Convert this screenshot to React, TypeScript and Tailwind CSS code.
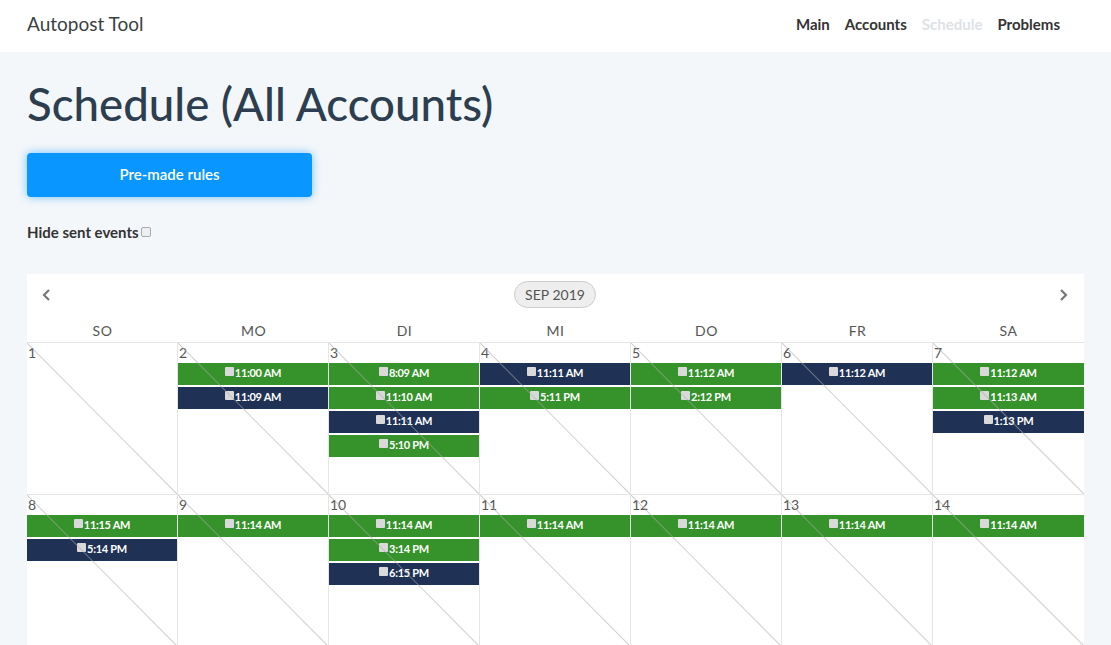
import React from "react";

type Ev = { t: string; c: "g" | "n" };

const weeks: { d: number; ev: Ev[] }[][] = [
  [
    { d: 1, ev: [] },
    { d: 2, ev: [{ t: "11:00 AM", c: "g" }, { t: "11:09 AM", c: "n" }] },
    {
      d: 3,
      ev: [
        { t: "8:09 AM", c: "g" },
        { t: "11:10 AM", c: "g" },
        { t: "11:11 AM", c: "n" },
        { t: "5:10 PM", c: "g" },
      ],
    },
    { d: 4, ev: [{ t: "11:11 AM", c: "n" }, { t: "5:11 PM", c: "g" }] },
    { d: 5, ev: [{ t: "11:12 AM", c: "g" }, { t: "2:12 PM", c: "g" }] },
    { d: 6, ev: [{ t: "11:12 AM", c: "n" }] },
    {
      d: 7,
      ev: [
        { t: "11:12 AM", c: "g" },
        { t: "11:13 AM", c: "g" },
        { t: "1:13 PM", c: "n" },
      ],
    },
  ],
  [
    { d: 8, ev: [{ t: "11:15 AM", c: "g" }, { t: "5:14 PM", c: "n" }] },
    { d: 9, ev: [{ t: "11:14 AM", c: "g" }] },
    {
      d: 10,
      ev: [
        { t: "11:14 AM", c: "g" },
        { t: "3:14 PM", c: "g" },
        { t: "6:15 PM", c: "n" },
      ],
    },
    { d: 11, ev: [{ t: "11:14 AM", c: "g" }] },
    { d: 12, ev: [{ t: "11:14 AM", c: "g" }] },
    { d: 13, ev: [{ t: "11:14 AM", c: "g" }] },
    { d: 14, ev: [{ t: "11:14 AM", c: "g" }] },
  ],
];

const days = ["SO", "MO", "DI", "MI", "DO", "FR", "SA"];

function Event({ ev }: { ev: Ev }) {
  return (
    <div
      className={
        "flex h-[22px] items-center justify-center text-[11px] font-bold tracking-[-0.3px] text-white " +
        (ev.c === "g" ? "bg-[#36922a]" : "bg-[#1f3256]")
      }
    >
      <span className="mr-px mb-[5px] inline-block h-[9px] w-[9px] rounded-[1px] bg-[#d9d9d9]" />
      {ev.t}
    </div>
  );
}

export default function App() {
  return (
    <div className="min-h-screen bg-[#f4f7fa] font-['Lato',sans-serif] text-[#333]">
      <nav className="flex h-[52px] items-center justify-between bg-white pb-[4px] pl-[27px] pr-[51px]">
        <span className="text-[19px] text-[#3a3f44]">Autopost Tool</span>
        <div className="flex gap-[15px] text-[15px] font-bold text-[#333]">
          <a>Main</a>
          <a>Accounts</a>
          <a className="text-[#dde2e6]">Schedule</a>
          <a>Problems</a>
        </div>
      </nav>

      <main className="px-[27px]">
        <h1 className="mt-[24px] text-[45.6px] font-medium leading-[56px] text-[#2c3e50]">
          Schedule (All Accounts)
        </h1>
        <button className="mt-[21px] h-[44px] w-[285px] rounded-[4px] bg-[#0a96ff] pb-[2px] text-[15px] font-semibold text-white shadow-[0_0_10px_rgba(10,150,255,0.55)]">
          Pre-made rules
        </button>
        <label className="mt-[24px] flex items-center text-[15px] font-bold text-[#333]">
          Hide sent events
          <span className="ml-[2px] inline-block h-[10px] w-[10px] rounded-[2px] border border-[#aaa] bg-[#eee]" />
        </label>

        <section className="mt-[30px] w-[1057px] bg-white">
          <div className="flex h-[44px] items-center justify-between px-[13px] pb-[2px]">
            <svg width="12" height="14" viewBox="0 0 12 14" className="ml-[1px]">
              <path d="M8 2 L3 7 L8 12" fill="none" stroke="#777" strokeWidth="2.2" />
            </svg>
            <span className="rounded-full border border-[#ccc] bg-[#eeeeee] px-[10px] py-[2px] text-[14px] text-[#555]">
              SEP 2019
            </span>
            <svg width="12" height="14" viewBox="0 0 12 14" className="mr-[2px]">
              <path d="M4 2 L9 7 L4 12" fill="none" stroke="#777" strokeWidth="2.2" />
            </svg>
          </div>
          <div className="grid grid-cols-7 border-b border-[#e6e6e6]">
            {days.map((d) => (
              <div key={d} className="h-[24px] text-center text-[14px] leading-[26px] tracking-[0.5px] text-[#555]">
                {d}
              </div>
            ))}
          </div>
          {weeks.map((w, i) => (
            <div key={i} className="grid grid-cols-7 border-b border-[#e6e6e6]">
              {w.map((c, j) => (
                <div
                  key={c.d}
                  className={
                    "relative h-[151px] " + (j < 6 ? "border-r border-[#e6e6e6]" : "")
                  }
                >
                  <div className="h-[20px] pl-[1px] pt-[1px] text-[14px] leading-[18px] text-[#555]">
                    {c.d}
                  </div>
                  <div className="flex flex-col gap-[2px]">
                    {c.ev.map((e, k) => (
                      <Event key={k} ev={e} />
                    ))}
                  </div>
                  <div className="pointer-events-none absolute inset-0 bg-[linear-gradient(to_top_right,transparent_calc(50%-1px),rgba(170,170,170,0.55)_50%,transparent_calc(50%+1px))]" />
                </div>
              ))}
            </div>
          ))}
        </section>
      </main>
    </div>
  );
}
